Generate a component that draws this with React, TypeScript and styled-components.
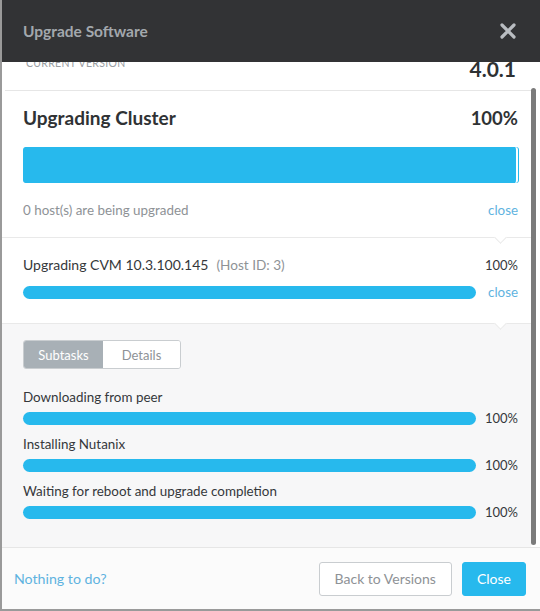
import * as React from "react";
import { styled, createGlobalStyle } from "styled-components";

const GlobalStyle = createGlobalStyle`
  html, body {
    margin: 0;
    padding: 0;
    background: #ffffff;
  }
  body {
    font-family: "Lato", "Open Sans", sans-serif;
    color: #333537;
  }
  * {
    box-sizing: border-box;
  }
`;

const Modal = styled.div`
  width: 540px;
  height: 611px;
  display: flex;
  flex-direction: column;
  border-left: 2px solid #9a9a9a;
  border-bottom: 2px solid #9a9a9a;
  overflow: hidden;
  background: #fff;
`;

const Header = styled.div`
  height: 62px;
  flex: none;
  background: #323335;
  display: flex;
  align-items: center;
  justify-content: space-between;
  padding: 0 24px 0 21px;
  position: relative;
  z-index: 2;
`;

const Title = styled.div`
  font-size: 15.5px;
  font-weight: 700;
  color: #a3a8ad;
`;

const CloseX = styled.button`
  border: 0;
  background: none;
  padding: 0;
  width: 16px;
  height: 16px;
  display: flex;
  cursor: pointer;
`;

const BodyWrap = styled.div`
  flex: 1;
  display: flex;
  min-height: 0;
`;

const Scroller = styled.div`
  flex: 1;
  overflow: hidden;
  display: flex;
  flex-direction: column;
`;

const ScrollTrack = styled.div`
  width: 9px;
  flex: none;
  padding: 26px 4px 2px 0;
  display: flex;
`;

const ScrollThumb = styled.div`
  flex: 1;
  width: 5px;
  border-radius: 3px;
  background: #7b7b7b;
`;

const VersionRow = styled.div`
  margin-top: -18px;
  height: 47px;
  flex: none;
  display: flex;
  justify-content: space-between;
  align-items: flex-start;
  padding: 0 15px 0 21px;
  border-bottom: 1px solid #e6e6e6;
  margin-left: 3px;
`;

const VersionLabel = styled.div`
  font-size: 10.5px;
  letter-spacing: 0.3px;
  text-transform: uppercase;
  color: #9a9ea3;
  padding-top: 13px;
`;

const VersionValue = styled.div`
  font-size: 21px;
  font-weight: 700;
  color: #2e3133;
  padding-top: 12px;
`;

const Section = styled.div<{ $tinted?: boolean; $caret?: boolean }>`
  position: relative;
  flex: none;
  background: ${(p) => (p.$tinted ? "#f7f7f8" : "#ffffff")};
  border-bottom: 1px solid #e9e9e9;
  padding: 0 13px 0 21px;

  ${(p) =>
    p.$caret &&
    `
    &::after {
      content: "";
      position: absolute;
      right: 26px;
      bottom: -5px;
      width: 8px;
      height: 8px;
      background: #ffffff;
      border-right: 1px solid #e9e9e9;
      border-bottom: 1px solid #e9e9e9;
      transform: rotate(45deg);
      z-index: 1;
    }
  `}
`;

const ClusterSection = styled(Section)`
  padding-top: 15px;
  padding-bottom: 19px;
`;

const CvmSection = styled(Section)`
  padding-top: 19px;
  padding-bottom: 22px;
`;

const SubtaskSection = styled(Section)`
  flex: 1;
  padding-top: 16px;
  border-bottom: 0;
`;

const HeadRow = styled.div`
  display: flex;
  justify-content: space-between;
  align-items: baseline;
`;

const BigTitle = styled.div`
  font-size: 19px;
  font-weight: 700;
  color: #2f3234;
  line-height: 24px;
`;

const BigPercent = styled.div`
  font-size: 18.5px;
  font-weight: 700;
  color: #2f3234;
`;

const BigBar = styled.div`
  margin-top: 17px;
  height: 36px;
  border-radius: 3px;
  background: #27b9ed;
  border-right: 2px solid #ffffff;
  box-shadow: 1px 0 0 #27b9ed;
`;

const MetaRow = styled.div`
  margin-top: 19px;
  display: flex;
  justify-content: space-between;
  align-items: center;
  line-height: 16px;
`;

const Muted = styled.span`
  font-size: 13.4px;
  color: #8e9296;
`;

const Link = styled.a`
  font-size: 13.4px;
  color: #5fb3e0;
  text-decoration: none;
  cursor: pointer;
`;

const TaskTitle = styled.div`
  font-size: 13.4px;
  color: #35383b;
  line-height: 16px;
`;

const CvmTitle = styled(TaskTitle)`
  font-size: 14px;

  ${Muted} {
    margin-left: 8px;
    font-size: 13.6px;
  }
`;

const TaskPercent = styled.span`
  font-size: 13px;
  color: #35383b;
`;

const BarRow = styled.div`
  display: flex;
  align-items: center;
  gap: 11px;
  margin-top: 10px;
  height: 18px;
`;

const ThinBar = styled.div`
  flex: 1;
  height: 13px;
  border-radius: 7px;
  background: #27b9ed;
`;

const SideCell = styled.div`
  width: 31px;
  flex: none;
  display: flex;
  justify-content: flex-end;
`;

const Toggle = styled.div`
  display: inline-flex;
  height: 29px;
  border: 1px solid #c9cdd0;
  border-radius: 3px;
  overflow: hidden;
  margin-bottom: 20px;
`;

const ToggleBtn = styled.button<{ $active?: boolean }>`
  border: 0;
  font-family: inherit;
  font-size: 13px;
  padding: 0;
  width: ${(p) => (p.$active ? "79px" : "77px")};
  background: ${(p) => (p.$active ? "#a8b0b6" : "#ffffff")};
  color: ${(p) => (p.$active ? "#ffffff" : "#8e9296")};
  cursor: pointer;
`;

const Task = styled.div`
  margin-bottom: 9px;

  ${BarRow} {
    margin-top: 4px;
  }
`;

const Footer = styled.div`
  height: 62px;
  flex: none;
  border-top: 1px solid #e6e6e6;
  background: #fbfbfb;
  display: flex;
  align-items: center;
  justify-content: space-between;
  padding: 0 14px 0 12px;
`;

const FooterLink = styled(Link)`
  font-size: 14.2px;
`;

const ButtonGroup = styled.div`
  display: flex;
  gap: 10px;
`;

const Button = styled.button<{ $primary?: boolean }>`
  height: 34px;
  padding: 0 ${(p) => (p.$primary ? "14px" : "15px")};
  border-radius: 3px;
  font-family: inherit;
  font-size: 14px;
  cursor: pointer;
  border: 1px solid ${(p) => (p.$primary ? "#27b9ed" : "#c9cdd0")};
  background: ${(p) => (p.$primary ? "#27b9ed" : "#ffffff")};
  color: ${(p) => (p.$primary ? "#ffffff" : "#8e9296")};
`;

const subtasks = [
  { name: "Downloading from peer", pct: 100 },
  { name: "Installing Nutanix", pct: 100 },
  { name: "Waiting for reboot and upgrade completion", pct: 100 },
];

export default function App() {
  return (
    <>
      <GlobalStyle />
      <Modal>
        <Header>
          <Title>Upgrade Software</Title>
          <CloseX aria-label="Close">
            <svg width="16" height="16" viewBox="0 0 16 16">
              <path
                d="M2 2 L14 14 M14 2 L2 14"
                stroke="#b9bdc1"
                strokeWidth="3.2"
                strokeLinecap="round"
              />
            </svg>
          </CloseX>
        </Header>
        <BodyWrap>
          <Scroller>
            <VersionRow>
              <VersionLabel>Current Version</VersionLabel>
              <VersionValue>4.0.1</VersionValue>
            </VersionRow>

            <ClusterSection $caret>
              <HeadRow>
                <BigTitle>Upgrading Cluster</BigTitle>
                <BigPercent>100%</BigPercent>
              </HeadRow>
              <BigBar />
              <MetaRow>
                <Muted>0 host(s) are being upgraded</Muted>
                <Link>close</Link>
              </MetaRow>
            </ClusterSection>

            <CvmSection $caret>
              <HeadRow>
                <CvmTitle>
                  Upgrading CVM 10.3.100.145
                  <Muted>(Host ID: 3)</Muted>
                </CvmTitle>
                <TaskPercent>100%</TaskPercent>
              </HeadRow>
              <BarRow>
                <ThinBar />
                <SideCell>
                  <Link>close</Link>
                </SideCell>
              </BarRow>
            </CvmSection>

            <SubtaskSection $tinted>
              <Toggle>
                <ToggleBtn $active>Subtasks</ToggleBtn>
                <ToggleBtn>Details</ToggleBtn>
              </Toggle>
              {subtasks.map((t) => (
                <Task key={t.name}>
                  <TaskTitle>{t.name}</TaskTitle>
                  <BarRow>
                    <ThinBar style={{ maxWidth: `${t.pct}%` }} />
                    <SideCell>
                      <TaskPercent>{t.pct}%</TaskPercent>
                    </SideCell>
                  </BarRow>
                </Task>
              ))}
            </SubtaskSection>
          </Scroller>
          <ScrollTrack>
            <ScrollThumb />
          </ScrollTrack>
        </BodyWrap>
        <Footer>
          <FooterLink>Nothing to do?</FooterLink>
          <ButtonGroup>
            <Button>Back to Versions</Button>
            <Button $primary>Close</Button>
          </ButtonGroup>
        </Footer>
      </Modal>
    </>
  );
}
